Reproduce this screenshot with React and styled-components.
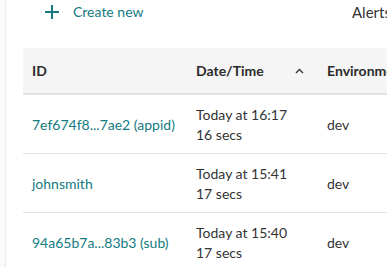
import styled, { createGlobalStyle } from 'styled-components'

const GlobalStyle = createGlobalStyle`
    body { margin: 0; background: #fff; font-family: Lato, "Open Sans", sans-serif; }
`;

const Page = styled.div`
    display: flex; flex-flow: row nowrap;
    width: 387px; height: 267px;
    overflow: hidden;
`;
const SideStrip = styled.div`
    width: 5px; flex: none;
    background: #fafafa;
    border-right: 1px solid #ececec;
`;
const Main = styled.div`
    flex: 1; min-width: 0;
    padding-left: 17px;
`;
const TopBar = styled.div`
    height: 48px;
    display: flex; align-items: flex-start;
    justify-content: space-between;
    padding-left: 22px;
`;
const CreateButton = styled.button`
    display: flex; align-items: center; gap: 14px;
    margin-top: 3px;
    border: none; background: none; padding: 0;
    font: 14px Lato, sans-serif;
    color: #137a7f;
`;
const AlertLink = styled.span`
    margin-top: 3px;
    font-size: 15px;
    color: #333;
    white-space: nowrap;
    width: 35px;
    flex: none;
`;
const Table = styled.table`
    border-collapse: collapse;
    width: 420px;
    table-layout: fixed;
    font-size: 14px;
    color: #333;
`;
const HeadCell = styled.th`
    box-sizing: border-box;
    height: 46px;
    background: #f5f5f5;
    border-bottom: 2px solid #e2e2e2;
    text-align: left;
    padding: 0 0 0 9px;
    font-weight: 700;
    color: #2b2b2b;
    white-space: nowrap;
    width: ${({w}) => w}px;
`;
const HeadInner = styled.div`
    display: flex; align-items: center; justify-content: space-between;
    padding-right: 14px;
`;
const Cell = styled.td`
    height: 57px;
    border-bottom: 1px solid #e3e3e3;
    padding: 1px 0 0 9px;
    vertical-align: middle;
    white-space: nowrap;
    line-height: 20px;
`;
const IdLink = styled.a`
    color: #137a7f;
    text-decoration: none;
`;
const Chevron = () => (
    <svg width="9" height="6" viewBox="0 0 9 6">
        <path d="M1 5 L4.5 1.5 L8 5" fill="none" stroke="#333" strokeWidth="1.4" />
    </svg>
)
const PlusIcon = () => (
    <svg width="14" height="14" viewBox="0 0 14 14">
        <path d="M7 0 V14 M0 7 H14" stroke="#137a7f" strokeWidth="2" />
    </svg>
)

const rows = [
    { id: '7ef674f8...7ae2 (appid)', date: 'Today at 16:17', dur: '16 secs', env: 'dev' },
    { id: 'johnsmith', date: 'Today at 15:41', dur: '17 secs', env: 'dev' },
    { id: '94a65b7a...83b3 (sub)', date: 'Today at 15:40', dur: '17 secs', env: 'dev' },
]

const App = () => {
    return (
        <Page>
            <GlobalStyle />
            <SideStrip />
            <Main>
                <TopBar>
                    <CreateButton><PlusIcon /> Create new</CreateButton>
                    <AlertLink>Alerts</AlertLink>
                </TopBar>
                <Table>
                    <thead>
                        <tr>
                            <HeadCell w={164}>ID</HeadCell>
                            <HeadCell w={131}>
                                <HeadInner>Date/Time <Chevron /></HeadInner>
                            </HeadCell>
                            <HeadCell w={125}>Environment</HeadCell>
                        </tr>
                    </thead>
                    <tbody>
                        {rows.map((r) => (
                            <tr key={r.id}>
                                <Cell><IdLink href="#">{r.id}</IdLink></Cell>
                                <Cell>{r.date}<br />{r.dur}</Cell>
                                <Cell>{r.env}</Cell>
                            </tr>
                        ))}
                    </tbody>
                </Table>
            </Main>
        </Page>
    )
}

export default App
